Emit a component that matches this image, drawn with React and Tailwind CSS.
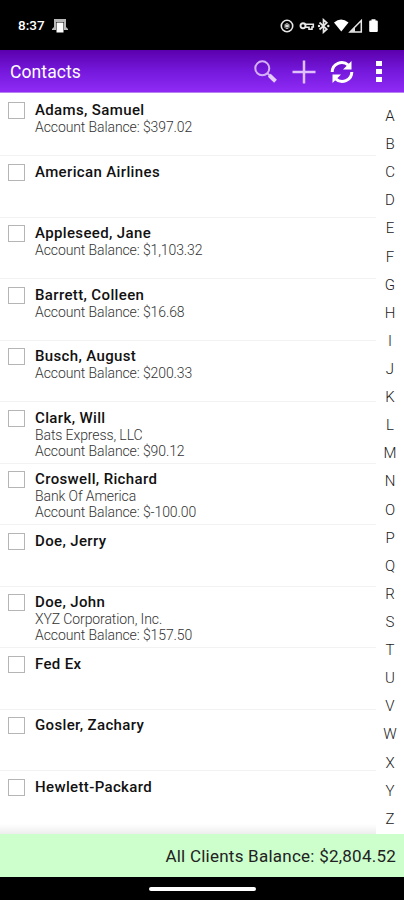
import React from 'react';

const contacts = [
  { name: 'Adams, Samuel', balance: '$397.02' },
  { name: 'American Airlines' },
  { name: 'Appleseed, Jane', balance: '$1,103.32' },
  { name: 'Barrett, Colleen', balance: '$16.68' },
  { name: 'Busch, August', balance: '$200.33' },
  { name: 'Clark, Will', company: 'Bats Express, LLC', balance: '$90.12' },
  { name: 'Croswell, Richard', company: 'Bank Of America', balance: '$-100.00' },
  { name: 'Doe, Jerry' },
  { name: 'Doe, John', company: 'XYZ Corporation, Inc.', balance: '$157.50' },
  { name: 'Fed Ex' },
  { name: 'Gosler, Zachary' },
  { name: 'Hewlett-Packard' },
];

const letters = 'ABCDEFGHIJKLMNOPQRSTUVWXYZ'.split('');

const StatusBar = () => (
  <div className="flex h-[50px] shrink-0 items-center bg-black pl-[18px] text-white">
    <span className="mt-px w-[27px] whitespace-nowrap text-[13.5px] font-medium leading-none">8:37</span>
    <svg className="ml-[7px] mt-[2px]" width="16" height="16" viewBox="0 0 16 16">
      <path d="M2 1h12v8l2 2v1h-4V4H4v8H0v-1l2-2z" fill="#b9b9b9" />
      <path d="M4.500 4.500h7v10h-7z" fill="#fff" />
    </svg>
    <svg className="ml-auto mr-[22px] mt-px" width="102" height="16" viewBox="0 0 102 16">
      <g fill="none" stroke="#e8e8e8">
        <circle cx="7" cy="8" r="5.700" strokeWidth="1.600" />
        <path d="M4.700 7a2.700 2.700 0 0 1 4.600 0M4.700 9.200a2.700 2.700 0 0 0 4.600 0" strokeWidth=".9" />
        <path d="M7 6.500v3M4.500 8h5" strokeWidth="1.500" />
        <circle cx="23" cy="7.800" r="2.500" strokeWidth="1.900" />
        <path d="M25.500 6.300h7.800v2.700h-1.300v2.300h-3V9.200h-3.500" strokeWidth="1.600" />
        <path d="M39.500 4.500l7.300 6.700-3.300 3V1.800l3.300 3-7.300 6.700" strokeWidth="1.700" />
      </g>
      <g fill="#e8e8e8">
        <circle cx="39" cy="8" r="1.200" />
        <circle cx="48.300" cy="8" r="1.200" />
      </g>
      <path d="M54 4.500Q61-1.300 68.500 4.500L61.300 13.500z" fill="#fff" />
      <path d="M81.300 2.500V14H70z" fill="none" stroke="#e8e8e8" strokeWidth="1.500" />
      <path d="M75 8.500v5.500h-5z" fill="#ddd" />
      <path d="M91.500 1.300h4v1.300h1.300q1 0 1 1V13q0 1-1 1h-6.600q-1 0-1-1V3.600q0-1 1-1h1.300z" fill="#fff" />
    </svg>
  </div>
);

const Toolbar = () => (
  <header className="flex h-[43px] shrink-0 items-center border-b border-[#b582f0] bg-linear-to-b from-[#5b00ad] via-[#7518dc] to-[#8f2af5] pl-[10px] pr-[22px] text-white">
    <h1 className="mt-[3px] text-[17.5px] leading-none tracking-[0.1px]">Contacts</h1>
    <div className="ml-auto mt-px flex items-center">
      <button type="button" aria-label="Search">
        <svg width="24" height="24" viewBox="0 0 24 24" fill="none">
          <circle cx="8.300" cy="8.300" r="7" stroke="#d5b0f7" strokeWidth="2" />
          <path d="M13.200 13l2.500 2.500" stroke="#d5b0f7" strokeWidth="2" />
          <path d="M15.300 15.300l6.200 5.900" stroke="#e5cdfa" strokeWidth="4" />
        </svg>
      </button>
      <button type="button" aria-label="Add" className="ml-[14px]">
        <svg width="24" height="24" viewBox="0 0 24 24">
          <path d="M12 .5v23M.5 12h23" stroke="#dfc0fa" strokeWidth="2.500" />
        </svg>
      </button>
      <button type="button" aria-label="Refresh" className="ml-[14px]">
        <svg width="24" height="24" viewBox="0 0 24 24" fill="none">
          <path d="M2.200 12A9.500 9.500 0 0 1 18.300 5.200M21.800 12A9.500 9.500 0 0 1 5.700 18.800" stroke="#fff" strokeWidth="3" />
          <path d="M21.500 1v8.500H13zM2.500 23v-8.500H11z" fill="#fff" />
        </svg>
      </button>
      <button type="button" aria-label="More" className="ml-[22px] flex flex-col gap-[3px]">
        <span className="h-[5px] w-[6px] bg-white" />
        <span className="h-[5px] w-[6px] bg-white" />
        <span className="h-[5px] w-[6px] bg-white" />
      </button>
    </div>
  </header>
);

const ContactRow = ({ contact }) => (
  <li className="flex h-[61.5px] shrink-0 border-b border-[#f2f2f2] pl-[8px] last:border-b-0">
    <span className="mt-[7.5px] h-[17px] w-[17px] shrink-0 border-[1.5px] border-[#b5b5b5] bg-white" />
    <div className="ml-[10px] whitespace-nowrap pt-[6.5px]">
      <p className="text-[15px] font-medium leading-[18px] tracking-[0.36px] text-[#111]">{contact.name}</p>
      {contact.company && (
        <p className="text-[14px] font-light leading-[16px] tracking-[-0.1px] text-[#333]">{contact.company}</p>
      )}
      {contact.balance && (
        <p className="text-[14px] font-light leading-[16px] tracking-[-0.1px] text-[#333]">
          Account Balance: {contact.balance}
        </p>
      )}
    </div>
  </li>
);

const App = () => (
  <div className="flex h-[900px] w-[404px] flex-col overflow-hidden bg-white font-[Roboto,sans-serif]">
    <StatusBar />
    <Toolbar />
    <main className="flex h-[741px] shrink-0 overflow-hidden">
      <div className="relative w-[376px]">
        <ul className="flex flex-col pt-[1.5px]">
          {contacts.map((contact) => (
            <ContactRow key={contact.name} contact={contact} />
          ))}
        </ul>
        <div className="absolute inset-x-0 bottom-0 h-[10px] bg-linear-to-b from-transparent to-black/7" />
      </div>
      <nav className="flex w-[28px] flex-col items-center pt-[9px] text-[15px] font-light text-[#222]">
        {letters.map((letter) => (
          <span key={letter} className="h-[28.12px] shrink-0 leading-[28px]">
            {letter}
          </span>
        ))}
      </nav>
    </main>
    <footer className="flex h-[43px] shrink-0 items-center justify-end bg-[#ccffcc] pr-[8px] pt-[2px] text-[17px] tracking-[0.24px] text-[#222]">
      All Clients Balance: $2,804.52
    </footer>
    <div className="flex grow justify-center bg-black pt-[10px]">
      <span className="h-[4px] w-[107px] rounded-full bg-white" />
    </div>
  </div>
);

export default App;
